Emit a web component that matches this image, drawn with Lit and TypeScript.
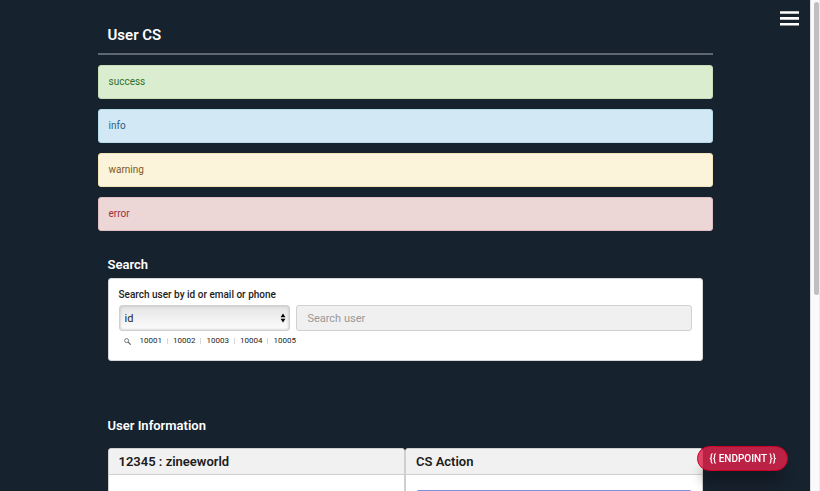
import { LitElement, html, css } from "lit";
import { customElement, state } from "lit/decorators.js";

@customElement("app-root")
export class AppRoot extends LitElement {
  @state() private field = "id";

  private alerts = ["success", "info", "warning", "error"];
  private recent = ["10001", "10002", "10003", "10004", "10005"];

  static styles = css`
    :host {
      display: grid;
      grid-template-columns: minmax(0, 1fr) 10px;
      grid-template-rows: 100vh;
      height: 100vh;
      overflow: hidden;
      background: #17222f;
      color: #1c1c1c;
      font-family: Roboto, "Liberation Sans", sans-serif;
      font-size: 11px;
      line-height: 16px;
    }
    * {
      box-sizing: border-box;
    }
    h1,
    h2,
    h3,
    ul {
      margin: 0;
      padding: 0;
      font-weight: 600;
    }
    main {
      width: 76%;
      max-width: 615px;
      margin: 0 auto;
    }
    h1 {
      padding: 25px 10px 8px;
      border-bottom: 2px solid #5f6871;
      color: #fff;
      font-size: 15px;
      line-height: 20px;
    }
    .alerts {
      display: grid;
      gap: 10px;
      padding-top: 10px;
    }
    .alert {
      padding: 8px 10px;
      border: 1px solid;
      border-radius: 3px;
      font-size: 10px;
    }
    .success {
      background: #daedcf;
      border-color: #c7dfb9;
      color: #2f6f2d;
    }
    .info {
      background: #d2e8f5;
      border-color: #b5dbe9;
      color: #2c5f86;
    }
    .warning {
      background: #fbf4db;
      border-color: #f3e4b8;
      color: #7d5a2a;
    }
    .error {
      background: #ecd6d6;
      border-color: #dfbfc4;
      color: #9c2f38;
    }
    section {
      padding: 0 10px;
    }
    h2 {
      color: #fff;
      font-size: 13px;
      line-height: 18px;
    }
    .search {
      padding-top: 25px;
    }
    .search h2 {
      padding-bottom: 4px;
    }
    .card {
      padding: 8px 10px 12px;
      background: #fff;
      border: 1px solid #d5d6d8;
      border-radius: 3px;
    }
    .label {
      display: block;
      padding-bottom: 2px;
      font-size: 10px;
      font-weight: 500;
    }
    .fields {
      display: grid;
      grid-template-columns: 30% 1fr;
      gap: 6px;
    }
    .picker {
      position: relative;
    }
    select,
    input {
      display: block;
      width: 100%;
      height: 26px;
      margin: 0;
      border: 1px solid #d0d0d0;
      border-radius: 3px;
      font: inherit;
      color: inherit;
    }
    select {
      appearance: none;
      padding: 2px 5px 0;
      background: linear-gradient(#e4e4e4, #fdfdfd);
      box-shadow: inset 0 0 3px #bbb;
    }
    .arrows {
      position: absolute;
      right: 4px;
      top: 8px;
      width: 6px;
      height: 10px;
      pointer-events: none;
    }
    input {
      padding: 0 10px;
      background: #f0f0f0;
    }
    input::placeholder {
      color: #999;
      opacity: 1;
    }
    .recent {
      display: flex;
      align-items: center;
      padding: 3px 5px 0;
      font-size: 8px;
      line-height: 14px;
    }
    .glass {
      width: 7px;
      height: 7px;
      margin-right: 4px;
    }
    .recent ul {
      display: flex;
      list-style: none;
    }
    .recent li {
      display: flex;
      align-items: center;
    }
    .recent li + li::before {
      content: "";
      height: 6px;
      border-left: 1px solid #d8d8d8;
    }
    .recent button {
      padding: 0 5px;
      border: 0;
      background: none;
      font: inherit;
      font-weight: 400;
      color: #1c1c1c;
    }
    .user {
      padding-top: 56px;
    }
    .user h2 {
      padding-bottom: 13px;
    }
    .panels {
      display: grid;
      grid-template-columns: 1fr 1fr;
    }
    .panel {
      min-height: 200px;
      background: #fff;
      border: 1px solid #cfcfcf;
      border-radius: 3px;
    }
    .panel h3 {
      padding: 4px 10px 3px;
      background: #f1f1f1;
      border-bottom: 1px solid #cfcfcf;
      border-radius: 2px 2px 0 0;
      font-size: 13px;
      line-height: 18px;
    }
    .panel .body {
      padding: 15px 10px;
    }
    .action {
      display: block;
      width: 100%;
      height: 26px;
      border: 0;
      border-radius: 3px;
      background: #8090dc;
    }
    .menu {
      position: fixed;
      top: 8px;
      right: 18px;
      padding: 3px;
      border: 0;
      background: none;
    }
    .menu svg {
      display: block;
      width: 19px;
      height: 15px;
    }
    .endpoint {
      position: fixed;
      right: 32px;
      bottom: 20px;
      padding: 4px 11px 3px;
      border: 1px solid #cc0022;
      border-radius: 13px;
      background: rgba(220, 35, 75, 0.84);
      box-shadow: 0 16px 12px -4px rgba(0, 0, 0, 0.28);
      color: #fff;
      font: inherit;
      font-size: 10px;
      font-weight: 500;
      white-space: nowrap;
    }
    .track {
      padding: 2px 2px 0 3px;
      background: #fafafa;
      border-left: 1px solid #dedede;
      border-right: 1px solid #ededed;
    }
    .thumb {
      width: 5px;
      height: 60%;
      border-radius: 3px;
      background: #bfbfbf;
    }
  `;

  private pick(e: Event) {
    this.field = (e.target as HTMLSelectElement).value;
  }

  render() {
    return html`
      <main>
        <h1>User CS</h1>
        <div class="alerts">
          ${this.alerts.map((a) => html`<div class="alert ${a}">${a}</div>`)}
        </div>
        <section class="search">
          <h2>Search</h2>
          <div class="card">
            <label class="label" for="query">Search user by id or email or phone</label>
            <div class="fields">
              <div class="picker">
                <select aria-label="Search field" .value=${this.field} @change=${this.pick}>
                  <option>id</option>
                  <option>email</option>
                  <option>phone</option>
                </select>
                <svg class="arrows" viewBox="0 0 6 10" aria-hidden="true">
                  <path d="M3 0.5 5.4 4.2H0.6ZM3 9.5 0.6 5.8H5.4Z" />
                </svg>
              </div>
              <input id="query" type="text" placeholder="Search user" />
            </div>
            <div class="recent">
              <svg class="glass" viewBox="0 0 7 7" fill="none" stroke="#555" aria-hidden="true">
                <circle cx="2.6" cy="2.6" r="2" stroke-width="0.8" />
                <path d="M4.2 4.2 6.6 6.6" stroke-width="1.1" />
              </svg>
              <ul>
                ${this.recent.map((id) => html`<li><button type="button">${id}</button></li>`)}
              </ul>
            </div>
          </div>
        </section>
        <section class="user">
          <h2>User Information</h2>
          <div class="panels">
            <div class="panel"><h3>12345 : zineeworld</h3></div>
            <div class="panel">
              <h3>CS Action</h3>
              <div class="body">
                <button class="action" type="button" aria-label="Action"></button>
              </div>
            </div>
          </div>
        </section>
      </main>
      <div class="track"><div class="thumb"></div></div>
      <button class="menu" type="button" aria-label="Menu">
        <svg viewBox="0 0 19 15" fill="#fff" aria-hidden="true">
          <path d="M0 0.2H19V2.8H0ZM0 6.1H19V8.7H0ZM0 12H19V14.6H0Z" />
        </svg>
      </button>
      <button class="endpoint" type="button">{{ ENDPOINT }}</button>
    `;
  }
}
